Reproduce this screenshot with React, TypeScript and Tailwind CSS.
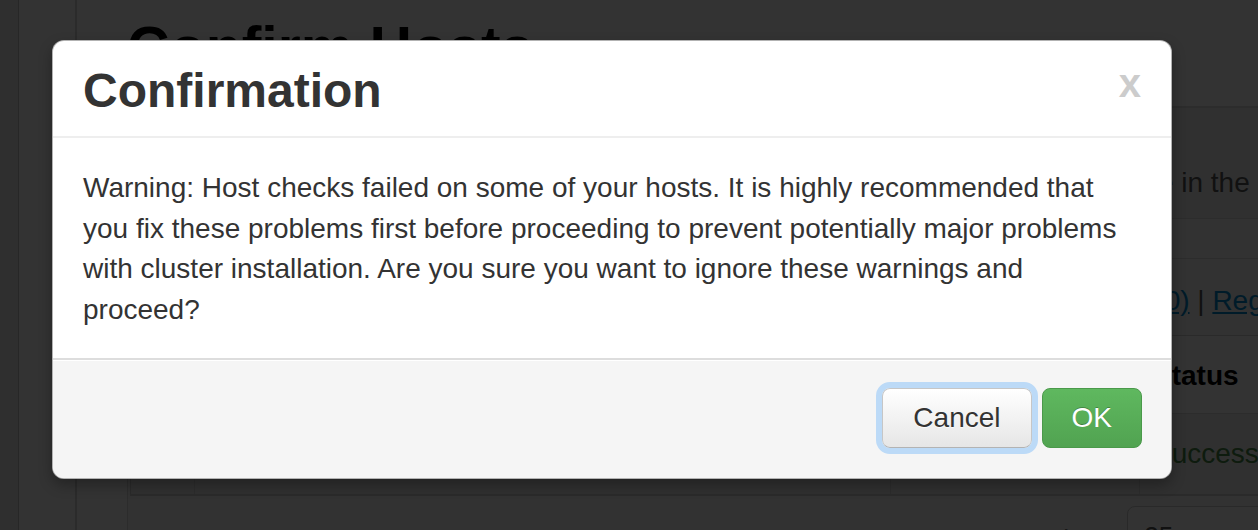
import { ChevronUp } from "lucide-react";

const hostRows = [
  { host: "c6401.ambari.apache.org", status: "Success" },
];

function PageBehind() {
  return (
    <div className="flex h-full w-[1500px]">
      <div className="w-[19px] shrink-0 border-r border-[#c4c4c4] bg-[#e9e9e9]" />
      <div className="w-[58px] shrink-0 border-r-2 border-[#d6d6d6]" />
      <div className="flex-1 pl-[50px]">
        <h1 className="mt-[19px] text-[59px] font-bold leading-[59px] text-black">Confirm Hosts</h1>
        <div className="mt-[28px] border-l border-t-2 border-[#d9d9d9] bg-[#f8f8f8]">
          <div className="border-b border-[#d9d9d9] bg-[#f1f1f1] px-[40px] py-[15px] text-[28px] leading-[40px] whitespace-nowrap text-[#555]">
            <p>Registering your hosts.</p>
            <p>Please confirm the host list and remove any hosts that you do not want to include in the cluster.</p>
          </div>
          <div className="h-[40px] border-b border-[#d9d9d9]" />
          <div className="flex items-center px-[41px] pt-[21px] pb-[13px] text-[28px] leading-[40px] whitespace-nowrap text-[#555]">
            <button className="w-[260px] rounded-[8px] border border-[#ccc] bg-white text-left">Remove Selected</button>
            <div className="ml-[428px]">
              Show: <a className="text-[#0088cc] underline">All (1)</a> | <a className="text-[#0088cc] underline">Installing (0)</a> |{" "}
              <a className="text-[#0088cc] underline">Registering (0)</a> | <a className="text-[#0088cc] underline">Success (1)</a> |{" "}
              <a className="text-[#0088cc] underline">Fail (0)</a>
            </div>
          </div>
          <div className="ml-[2px] border-l border-t border-[#d0d0d0] bg-white text-[28px] leading-[40px]">
            <div className="grid grid-cols-[63px_696px_249px_300px_150px] border-b border-[#d9d9d9] font-bold text-black">
              <div className="pt-[20px] pb-[17px]" />
              <div className="border-l border-[#d9d9d9] px-[16px] pt-[20px] pb-[17px]">Host</div>
              <div className="border-l border-[#d9d9d9] px-[16px] pt-[20px] pb-[17px]">Progress</div>
              <div className="border-l border-[#d9d9d9] pl-[13px] pr-[16px] pt-[20px] pb-[17px]">Status</div>
              <div className="border-l border-[#d9d9d9] px-[16px] pt-[20px] pb-[17px]">Action</div>
            </div>
            {hostRows.map((r) => (
              <div key={r.host} className="grid grid-cols-[63px_696px_249px_300px_150px] border-b-2 border-[#cfcfcf] bg-[#f0f0f0]">
                <div className="py-[20px]" />
                <div className="border-l border-[#d9d9d9] px-[16px] py-[20px]">{r.host}</div>
                <div className="border-l border-[#d9d9d9] px-[16px] py-[20px]" />
                <div className="border-l border-[#d9d9d9] pl-[13px] pr-[16px] py-[20px] text-[#468847]">{r.status}</div>
                <div className="border-l border-[#d9d9d9] px-[16px] py-[20px] text-[#0088cc]">Remove</div>
              </div>
            ))}
          </div>
          <div className="flex items-start pt-[10px] pl-[918px] text-[26px] text-[#777]">
            <span className="mt-[14px]">Show:</span>
            <div className="ml-[9px] flex h-[60px] w-[160px] items-center justify-between rounded-[8px] border border-[#ccc] bg-white pl-[16px] pr-[12px] text-[#555]">
              <span>25</span>
              <ChevronUp className="h-5 w-5 text-black" />
            </div>
          </div>
        </div>
      </div>
    </div>
  );
}

function ConfirmModal() {
  return (
    <div className="absolute top-[40px] left-[52px] w-[1120px] overflow-hidden rounded-[12px] border border-black/30 bg-white shadow-[0_6px_14px_rgba(0,0,0,0.3)]">
      <div className="flex items-start justify-between border-b-2 border-[#eeeeee] px-[30px] pt-[20px] pb-[15px]">
        <h3 className="text-[48px] font-bold leading-[60px] text-[#333]">Confirmation</h3>
        <button className="mt-[2px] text-[40px] font-bold leading-[40px] text-[#cccccc]">x</button>
      </div>
      <div className="px-[30px] pt-[30px] pb-[27px] text-[28px] leading-[40.67px] text-[#333]">
        Warning: Host checks failed on some of your hosts. It is highly recommended that you fix these problems first
        before proceeding to prevent potentially major problems with cluster installation. Are you sure you want to
        ignore these warnings and proceed?
      </div>
      <div className="flex justify-end gap-[10px] border-t-2 border-[#dddddd] bg-[#f5f5f5] px-[29px] pt-[28px] pb-[30px] shadow-[inset_0_1px_0_#ffffff]">
        <button className="h-[60px] rounded-[8px] border border-[#c6c6c6] border-b-[#b3b3b3] bg-gradient-to-b from-white to-[#e6e6e6] px-[30px] text-[28px] leading-[40px] text-[#333] outline-[6px] outline-solid outline-[#bcdaf7] [text-shadow:0_1px_1px_rgba(255,255,255,0.75)]">
          Cancel
        </button>
        <button className="h-[60px] rounded-[8px] border border-[#4a994a] bg-gradient-to-b from-[#5fb85f] to-[#51a351] px-[29px] text-[28px] leading-[40px] text-white [text-shadow:0_-1px_0_rgba(0,0,0,0.25)]">
          OK
        </button>
      </div>
    </div>
  );
}

export default function App() {
  return (
    <div className="relative h-[530px] w-full overflow-hidden bg-white font-['Liberation_Sans',Arial,sans-serif] text-[#333]">
      <PageBehind />
      <div className="absolute inset-0 bg-black/80" />
      <ConfirmModal />
    </div>
  );
}
